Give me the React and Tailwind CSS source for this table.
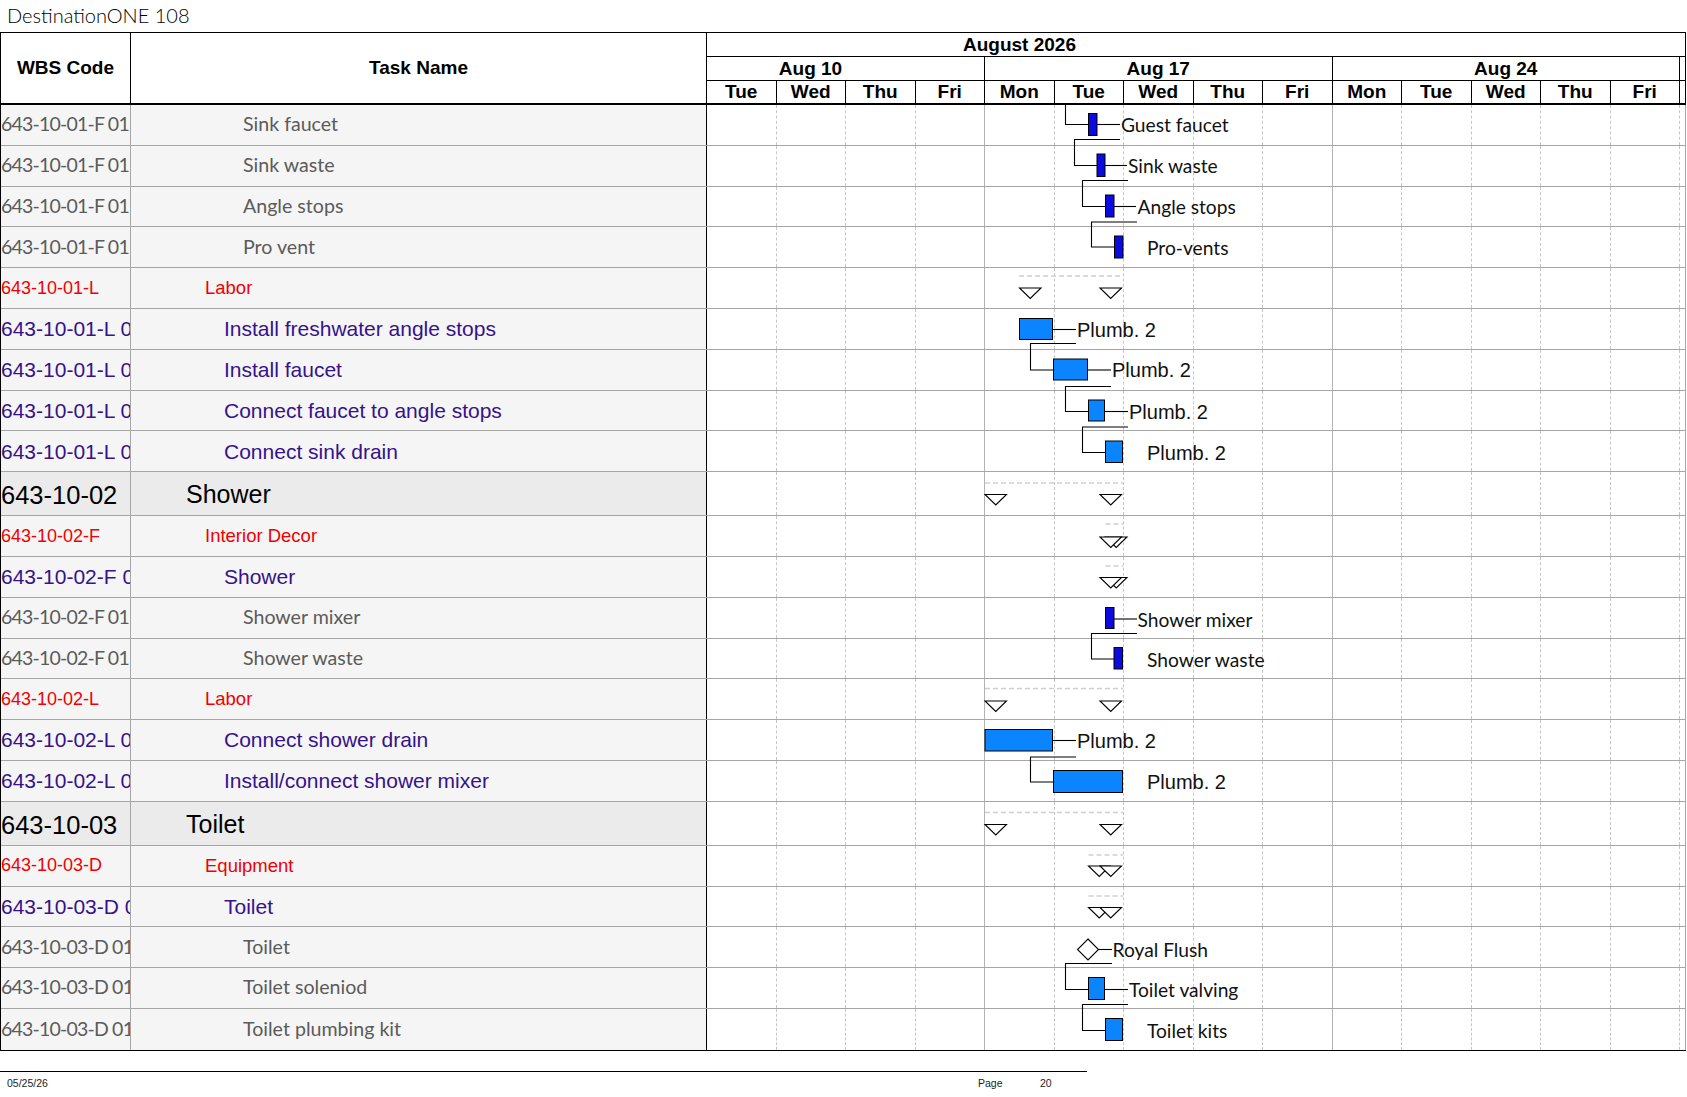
import React from 'react';

const DAYS = ['Tue', 'Wed', 'Thu', 'Fri', 'Mon', 'Tue', 'Wed', 'Thu', 'Fri', 'Mon', 'Tue', 'Wed', 'Thu', 'Fri'];

const ROWS = [
  { wbs: '643-10-01-F 01', name: 'Sink faucet', kind: 'item' },
  { wbs: '643-10-01-F 01', name: 'Sink waste', kind: 'item' },
  { wbs: '643-10-01-F 01', name: 'Angle stops', kind: 'item' },
  { wbs: '643-10-01-F 01', name: 'Pro vent', kind: 'item' },
  { wbs: '643-10-01-L', name: 'Labor', kind: 'group' },
  { wbs: '643-10-01-L 01', name: 'Install freshwater angle stops', kind: 'task' },
  { wbs: '643-10-01-L 02', name: 'Install faucet', kind: 'task' },
  { wbs: '643-10-01-L 03', name: 'Connect faucet to angle stops', kind: 'task' },
  { wbs: '643-10-01-L 04', name: 'Connect sink drain', kind: 'task' },
  { wbs: '643-10-02', name: 'Shower', kind: 'section' },
  { wbs: '643-10-02-F', name: 'Interior Decor', kind: 'group' },
  { wbs: '643-10-02-F 01', name: 'Shower', kind: 'task' },
  { wbs: '643-10-02-F 01', name: 'Shower mixer', kind: 'item' },
  { wbs: '643-10-02-F 01', name: 'Shower waste', kind: 'item' },
  { wbs: '643-10-02-L', name: 'Labor', kind: 'group' },
  { wbs: '643-10-02-L 01', name: 'Connect shower drain', kind: 'task' },
  { wbs: '643-10-02-L 02', name: 'Install/connect shower mixer', kind: 'task' },
  { wbs: '643-10-03', name: 'Toilet', kind: 'section' },
  { wbs: '643-10-03-D', name: 'Equipment', kind: 'group' },
  { wbs: '643-10-03-D 01', name: 'Toilet', kind: 'task' },
  { wbs: '643-10-03-D 01', name: 'Toilet', kind: 'item' },
  { wbs: '643-10-03-D 01', name: 'Toilet soleniod', kind: 'item' },
  { wbs: '643-10-03-D 01', name: 'Toilet plumbing kit', kind: 'item' },
];

// text styles per outline level
const KIND = {
  item: {
    wbs: "pb-[2px] text-[19.5px] tracking-[-0.8px] text-[#5b5b5b] font-['Lato',sans-serif]",
    name: "pb-[2px] pl-[112px] text-[19.6px] text-[#5b5b5b] font-['Lato',sans-serif]",
  },
  task: {
    wbs: "text-[21px] text-[#36128c] font-['Liberation_Sans',sans-serif]",
    name: "pl-[93px] text-[21px] text-[#36128c] font-['Liberation_Sans',sans-serif]",
  },
  group: {
    wbs: "text-[18px] text-[#f00000] font-['Liberation_Sans',sans-serif]",
    name: "pl-[74px] text-[18.5px] text-[#f00000] font-['Liberation_Sans',sans-serif]",
  },
  section: {
    wbs: "pt-[3px] text-[25.5px] text-black font-['Liberation_Sans',sans-serif]",
    name: "pt-[3px] pl-[55px] text-[25px] text-black font-['Liberation_Sans',sans-serif]",
  },
};

const DARK = '#0b0be0';
const LIGHT = '#0a84ff';
const CAL = "Lato, 'Open Sans', sans-serif";
const ARIAL = "'Liberation Sans', Arial, sans-serif";

function Bar({ x1, x2, y, h, fill }) {
  return <rect x={x1} y={y} width={x2 - x1} height={h} fill={fill} stroke="#000" strokeWidth="1" />;
}

function Link({ pts }) {
  return <polyline points={pts.map((p) => p.join(',')).join(' ')} fill="none" stroke="#000" strokeWidth="1.1" />;
}

function Label({ x, y, children, arial }) {
  return (
    <text
      x={x}
      y={y}
      dominantBaseline="central"
      fontFamily={arial ? ARIAL : CAL}
      fontSize={arial ? 20 : 19.2}
      fill="#111"
    >
      {children}
    </text>
  );
}

function Tri({ x, top }) {
  return (
    <polygon
      points={`${x},${top} ${x + 21.5},${top} ${x + 10.75},${top + 10.5}`}
      fill="#fff"
      stroke="#000"
      strokeWidth="1.1"
    />
  );
}

function Dash({ x1, x2, y }) {
  return <line x1={x1} x2={x2} y1={y} y2={y} stroke="#cfcfcf" strokeWidth="1.6" strokeDasharray="5 3" />;
}

function GanttOverlay() {
  return (
    <svg className="absolute left-0 top-0 pointer-events-none" width="1687" height="1097">
      {/* sink fixtures */}
      <Link pts={[[1065.5, 105], [1065.5, 124.5], [1088.5, 124.5]]} />
      <Bar x1={1088.5} x2={1097} y={113.5} h={22} fill={DARK} />
      <Link pts={[[1097, 124.5], [1120, 124.5]]} />
      <Label x={1121} y={124.5}>Guest faucet</Label>

      <Link pts={[[1120, 139.5], [1074.5, 139.5], [1074.5, 165.5], [1097, 165.5]]} />
      <Bar x1={1097} x2={1105} y={154} h={22.5} fill={DARK} />
      <Link pts={[[1105, 165.5], [1127, 165.5]]} />
      <Label x={1128} y={165.5}>Sink waste</Label>

      <Link pts={[[1128, 180.5], [1082.5, 180.5], [1082.5, 206.5], [1105.5, 206.5]]} />
      <Bar x1={1105.5} x2={1114} y={195} h={22} fill={DARK} />
      <Link pts={[[1114, 206.5], [1136, 206.5]]} />
      <Label x={1137.5} y={206.5}>Angle stops</Label>

      <Link pts={[[1137, 222], [1091.5, 222], [1091.5, 247], [1114.5, 247]]} />
      <Bar x1={1114.5} x2={1123} y={236} h={22} fill={DARK} />
      <Label x={1147} y={247}>Pro-vents</Label>

      {/* sink labor */}
      <Dash x1={1019} x2={1123} y={276} />
      <Tri x={1019.5} top={288} />
      <Tri x={1100} top={288} />

      <Bar x1={1019.5} x2={1052.5} y={318.5} h={21} fill={LIGHT} />
      <Link pts={[[1052.5, 329.5], [1076, 329.5]]} />
      <Label x={1077} y={329.5} arial>Plumb. 2</Label>

      <Link pts={[[1076, 343.5], [1030.5, 343.5], [1030.5, 370], [1053.5, 370]]} />
      <Bar x1={1053.5} x2={1087.5} y={359} h={21} fill={LIGHT} />
      <Link pts={[[1087.5, 370], [1111, 370]]} />
      <Label x={1112} y={370} arial>Plumb. 2</Label>

      <Link pts={[[1111, 386.5], [1065.5, 386.5], [1065.5, 411.5], [1088.5, 411.5]]} />
      <Bar x1={1088.5} x2={1104.5} y={400} h={21} fill={LIGHT} />
      <Link pts={[[1104.5, 411.5], [1128, 411.5]]} />
      <Label x={1129} y={411.5} arial>Plumb. 2</Label>

      <Link pts={[[1128, 427], [1082.5, 427], [1082.5, 452.5], [1105.5, 452.5]]} />
      <Bar x1={1105.5} x2={1122.5} y={441} h={21.5} fill={LIGHT} />
      <Label x={1147} y={452.5} arial>Plumb. 2</Label>

      {/* shower */}
      <Dash x1={985} x2={1123} y={483} />
      <Tri x={985} top={494.5} />
      <Tri x={1100} top={494.5} />

      <Dash x1={1105.5} x2={1123} y={524} />
      <Tri x={1105.5} top={537} />
      <Tri x={1100} top={537} />

      <Dash x1={1105.5} x2={1123} y={566} />
      <Tri x={1105.5} top={577.5} />
      <Tri x={1100} top={577.5} />

      <Bar x1={1105.5} x2={1114} y={607.5} h={21} fill={DARK} />
      <Link pts={[[1114, 619], [1137, 619]]} />
      <Label x={1137.5} y={619}>Shower mixer</Label>

      <Link pts={[[1137, 633.5], [1091.5, 633.5], [1091.5, 659], [1114, 659]]} />
      <Bar x1={1114} x2={1122.5} y={647.5} h={21.5} fill={DARK} />
      <Label x={1147} y={659}>Shower waste</Label>

      <Dash x1={985} x2={1123} y={688.5} />
      <Tri x={985} top={701} />
      <Tri x={1100} top={701} />

      <Bar x1={985} x2={1052.5} y={729.5} h={21.5} fill={LIGHT} />
      <Link pts={[[1052.5, 740.5], [1076, 740.5]]} />
      <Label x={1077} y={740.5} arial>Plumb. 2</Label>

      <Link pts={[[1076, 757], [1030.5, 757], [1030.5, 782], [1053.5, 782]]} />
      <Bar x1={1053.5} x2={1122.5} y={770.5} h={22} fill={LIGHT} />
      <Label x={1147} y={782} arial>Plumb. 2</Label>

      {/* toilet */}
      <Dash x1={985} x2={1123} y={812.5} />
      <Tri x={985} top={824.5} />
      <Tri x={1100} top={824.5} />

      <Dash x1={1088.5} x2={1123} y={855} />
      <Tri x={1088.5} top={866} />
      <Tri x={1100} top={866} />

      <Dash x1={1088.5} x2={1123} y={896} />
      <Tri x={1088.5} top={907.5} />
      <Tri x={1100} top={907.5} />

      <polygon points="1088,939 1098.5,949.5 1088,960 1077.5,949.5" fill="#fff" stroke="#000" strokeWidth="1.1" />
      <Link pts={[[1098.5, 949.5], [1112, 949.5]]} />
      <Label x={1112.5} y={949.5}>Royal Flush</Label>

      <Link pts={[[1112, 963.5], [1065.5, 963.5], [1065.5, 989.5], [1088.5, 989.5]]} />
      <Bar x1={1088.5} x2={1104.5} y={977.5} h={22} fill={LIGHT} />
      <Link pts={[[1104.5, 989.5], [1128, 989.5]]} />
      <Label x={1129} y={989.5}>Toilet valving</Label>

      <Link pts={[[1128, 1004.5], [1082.5, 1004.5], [1082.5, 1030.5], [1105.5, 1030.5]]} />
      <Bar x1={1105.5} x2={1122.5} y={1018.5} h={22} fill={LIGHT} />
      <Label x={1147} y={1030.5}>Toilet kits</Label>
    </svg>
  );
}

function DayCells() {
  return (
    <>
      {DAYS.map((d, i) => (
        <div
          key={i}
          className={
            i === 3 || i === 8
              ? 'w-[69.5px] shrink-0 border-r border-solid border-[#b3b3b3]'
              : 'w-[69.5px] shrink-0 border-r border-dashed border-[#c6c6c6]'
          }
        />
      ))}
      <div className="w-[5px] shrink-0" />
    </>
  );
}

function Header() {
  return (
    <div className="flex h-[72px] border-b-2 border-r border-black font-['Liberation_Sans',sans-serif] font-bold text-[19px] text-black">
      <div className="w-[130px] shrink-0 border-r border-black flex items-center justify-center">WBS Code</div>
      <div className="w-[576px] shrink-0 border-r border-black flex items-center justify-center">Task Name</div>
      <div className="flex-1 flex flex-col">
        <div className="h-[24px] border-b border-black flex">
          <div className="w-[625px] text-center leading-[23px]">August 2026</div>
        </div>
        <div className="h-[24px] border-b border-black flex">
          <div className="w-[278px] shrink-0 border-r border-black overflow-hidden flex justify-end">
            <div className="w-[347px] shrink-0 text-center leading-[23px]">Aug 10</div>
          </div>
          <div className="w-[347.5px] shrink-0 border-r border-black text-center leading-[23px]">Aug 17</div>
          <div className="w-[347.5px] shrink-0 border-r border-black text-center leading-[23px]">Aug 24</div>
          <div className="w-[5px] shrink-0" />
        </div>
        <div className="h-[22px] flex">
          {DAYS.map((d, i) => (
            <div key={i} className="w-[69.5px] shrink-0 border-r border-black text-center leading-[22px]">
              {d}
            </div>
          ))}
          <div className="w-[5px] shrink-0" />
        </div>
      </div>
    </div>
  );
}

function Row({ row, last }) {
  const k = KIND[row.kind];
  const big = row.kind === 'section';
  const bg = big ? 'bg-[#ebebeb]' : 'bg-[#f5f5f5]';
  return (
    <div
      className={`flex border-r border-[#a6a6a6] ${big ? 'h-[44px]' : 'h-[40.8px]'} ${
        last ? '' : 'border-b border-b-[#a6a6a6]'
      }`}
    >
      <div className={`w-[130px] shrink-0 border-r border-[#a6a6a6] overflow-hidden whitespace-nowrap flex items-center ${bg} ${k.wbs}`}>
        {row.wbs}
      </div>
      <div className={`w-[576px] shrink-0 border-r border-black overflow-hidden whitespace-nowrap flex items-center ${bg} ${k.name}`}>
        {row.name}
      </div>
      <DayCells />
    </div>
  );
}

export default function App() {
  return (
    <div className="relative w-[1687px] h-[1097px] bg-white overflow-hidden">
      <div className="h-[32px] pl-[7px] text-[20px] font-light leading-[30px] text-black font-['Lato',sans-serif]">
        DestinationONE 108
      </div>
      <div className="w-[1686px] border-l border-t border-b border-black">
        <Header />
        {ROWS.map((row, i) => (
          <Row key={i} row={row} last={i === ROWS.length - 1} />
        ))}
      </div>
      <div className="mt-[20px] w-[1087px] border-t border-black" />
      <div className="flex h-[24px] items-center text-[10.5px] text-[#222] font-['Liberation_Sans',sans-serif]">
        <div className="w-[978px] pl-[7px]">05/25/26</div>
        <div className="w-[62px]">Page</div>
        <div>20</div>
      </div>
      <GanttOverlay />
    </div>
  );
}
